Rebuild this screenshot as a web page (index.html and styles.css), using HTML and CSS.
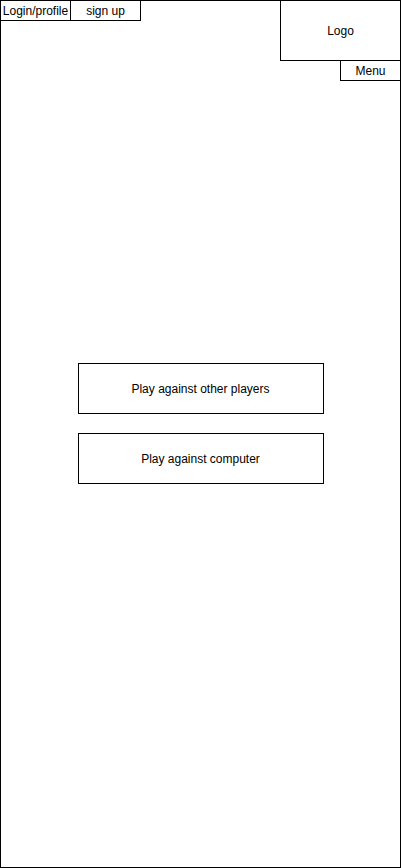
FILE: index.html
```html
<!DOCTYPE html>
<html lang="en">
<head>
<meta charset="utf-8">
<title>Game home</title>
<link rel="stylesheet" href="styles.css">
</head>
<body>
<div class="frame">
  <header class="top">
    <div class="auth">
      <div class="box auth-btn">Login/profile</div>
      <div class="box auth-btn joined">sign up</div>
    </div>
    <div class="brand">
      <div class="box logo">Logo</div>
      <div class="box menu">Menu</div>
    </div>
  </header>
  <main class="actions">
    <div class="box play">Play against other players</div>
    <div class="box play">Play against computer</div>
  </main>
</div>
</body>
</html>
```
FILE: styles.css
```css
html, body {
  margin: 0;
  padding: 0;
  background: #fff;
}
body {
  font-family: "Liberation Sans", Arial, sans-serif;
  font-size: 12px;
  color: #000;
}
.frame {
  box-sizing: border-box;
  width: 401px;
  height: 868px;
  border: 1px solid #000;
  display: flex;
  flex-direction: column;
}
.box {
  box-sizing: border-box;
  border: 1px solid #000;
  display: flex;
  align-items: center;
  justify-content: center;
  background: #fff;
}
.top {
  display: flex;
  justify-content: space-between;
  align-items: flex-start;
  margin: -1px -1px 0;
}
.auth {
  display: flex;
}
.auth-btn {
  width: 71px;
  height: 21px;
}
.joined {
  margin-left: -1px;
}
.brand {
  display: flex;
  flex-direction: column;
  align-items: flex-end;
}
.logo {
  width: 121px;
  height: 61px;
}
.menu {
  width: 61px;
  height: 21px;
  margin-top: -1px;
}
.actions {
  display: flex;
  flex-direction: column;
  align-items: center;
  gap: 19px;
  margin-top: 282px;
}
.play {
  width: 246px;
  height: 51px;
}
```
